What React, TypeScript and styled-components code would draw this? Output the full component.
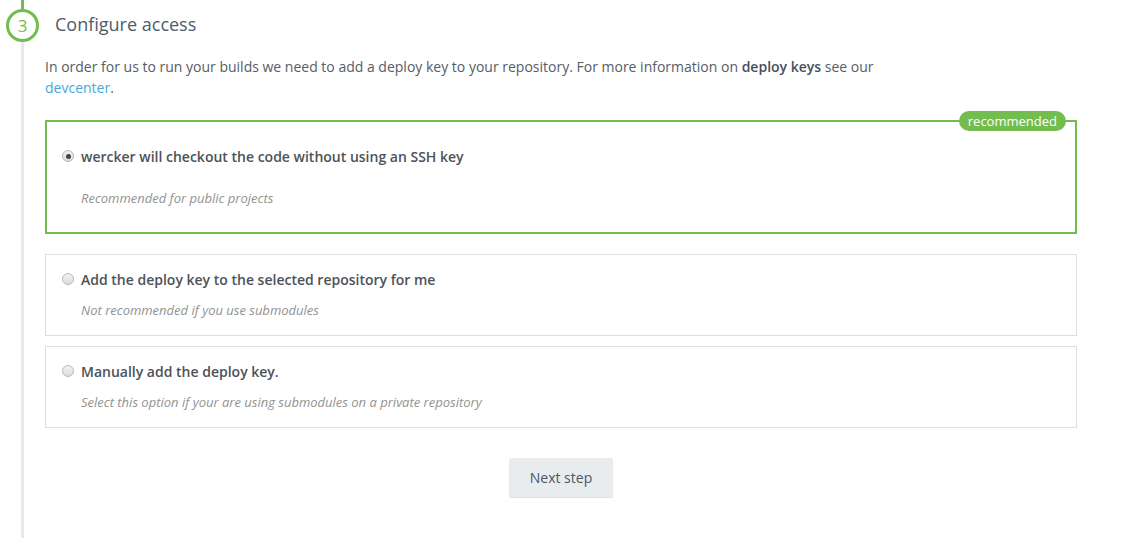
import styled, { createGlobalStyle } from 'styled-components';

const GlobalStyle = createGlobalStyle`
    body {
        margin: 0;
        background: #fff;
        font-family: "Open Sans", "Liberation Sans", sans-serif;
    }
`;

const Page = styled.div`
    display: flex;
    min-height: 538px;
`;

const Rail = styled.div`
    width: 45px;
    display: flex;
    flex-direction: column;
    align-items: center;
    flex-shrink: 0;
`;

const RailTop = styled.div`
    width: 3px;
    height: 9px;
    background: #72bd4e;
`;

const StepCircle = styled.div`
    width: 33px;
    height: 33px;
    box-sizing: border-box;
    border: 3px solid #72bd4e;
    border-radius: 50%;
    display: flex;
    align-items: center;
    justify-content: center;
    color: #72bd4e;
    font-size: 17px;
`;

const RailLine = styled.div`
    width: 3px;
    flex: 1;
    background: #e7e9ec;
`;

const Content = styled.div`
    width: 1032px;
    padding-bottom: 40px;
`;

const Header = styled.div`
    height: 42px;
    display: flex;
    align-items: center;
    padding: 6px 0 0 10px;
    box-sizing: border-box;
`;

const Title = styled.h2`
    margin: 0;
    font-size: 18px;
    font-weight: 400;
    color: #4e5c6c;
`;

const Intro = styled.p`
    margin: 14px 0 0;
    max-width: 860px;
    font-size: 14px;
    line-height: 21px;
    color: #555d66;
`;

const Strong = styled.strong`
    font-weight: 600;
    color: #46505c;
`;

const Link = styled.a`
    color: #4aa7d6;
    text-decoration: none;
`;

const Options = styled.div`
    margin-top: 22px;
    display: flex;
    flex-direction: column;
`;

const OptionBox = styled.label<{ $selected?: boolean; $gap: number }>`
    position: relative;
    display: block;
    margin-top: ${(p) => p.$gap}px;
    border: ${(p) => (p.$selected ? '2px solid #72bd4e' : '1px solid #dedede')};
    padding: ${(p) => (p.$selected ? '24px 16px 24px 15px' : '14px 16px 15px 16px')};
    cursor: pointer;
`;

const Badge = styled.span`
    position: absolute;
    top: -11px;
    right: 9px;
    height: 20px;
    padding: 0 9px;
    border-radius: 10px;
    background: #72bd4e;
    color: #fff;
    font-size: 13px;
    line-height: 20px;
`;

const OptionRow = styled.div`
    display: flex;
    align-items: center;
    height: 20px;
`;

const Radio = styled.span<{ $checked?: boolean }>`
    width: 12px;
    height: 12px;
    box-sizing: border-box;
    border-radius: 50%;
    border: 1px solid #b9b9b9;
    background: linear-gradient(#f3f3f3, #dcdcdc);
    margin-right: 7px;
    display: flex;
    align-items: center;
    justify-content: center;
    &::after {
        content: '';
        display: ${(p) => (p.$checked ? 'block' : 'none')};
        width: 5px;
        height: 5px;
        border-radius: 50%;
        background: #444;
    }
`;

const OptionLabel = styled.span`
    font-size: 14px;
    font-weight: 600;
    color: #4d5258;
`;

const OptionHint = styled.div<{ $selected?: boolean }>`
    margin: ${(p) => (p.$selected ? '22px' : '11px')} 0 0 19px;
    font-size: 13px;
    line-height: 20px;
    font-style: italic;
    color: #929292;
`;

const Actions = styled.div`
    display: flex;
    justify-content: center;
    margin-top: 30px;
`;

const NextButton = styled.button`
    width: 104px;
    height: 39px;
    border: none;
    border-radius: 2px;
    background: #e9ecef;
    box-shadow: 0 1px 1px rgba(0, 0, 0, 0.12);
    color: #4c5666;
    font-family: inherit;
    font-size: 14px;
    font-weight: 500;
    cursor: pointer;
`;

const options = [
    {
        id: 'none',
        label: 'wercker will checkout the code without using an SSH key',
        hint: 'Recommended for public projects',
        selected: true,
        gap: 0,
    },
    {
        id: 'auto',
        label: 'Add the deploy key to the selected repository for me',
        hint: 'Not recommended if you use submodules',
        selected: false,
        gap: 20,
    },
    {
        id: 'manual',
        label: 'Manually add the deploy key.',
        hint: 'Select this option if your are using submodules on a private repository',
        selected: false,
        gap: 10,
    },
];

const App = () => {
    return (
        <Page>
            <GlobalStyle />
            <Rail>
                <RailTop />
                <StepCircle>3</StepCircle>
                <RailLine />
            </Rail>
            <Content>
                <Header>
                    <Title>Configure access</Title>
                </Header>
                <Intro>
                    In order for us to run your builds we need to add a deploy key to your
                    repository. For more information on <Strong>deploy keys</Strong> see our{' '}
                    <Link href="#">devcenter</Link>.
                </Intro>
                <Options>
                    {options.map((opt) => (
                        <OptionBox key={opt.id} $selected={opt.selected} $gap={opt.gap}>
                            {opt.selected && <Badge>recommended</Badge>}
                            <OptionRow>
                                <Radio $checked={opt.selected} />
                                <OptionLabel>{opt.label}</OptionLabel>
                            </OptionRow>
                            <OptionHint $selected={opt.selected}>{opt.hint}</OptionHint>
                        </OptionBox>
                    ))}
                </Options>
                <Actions>
                    <NextButton>Next step</NextButton>
                </Actions>
            </Content>
        </Page>
    );
};

export default App;
